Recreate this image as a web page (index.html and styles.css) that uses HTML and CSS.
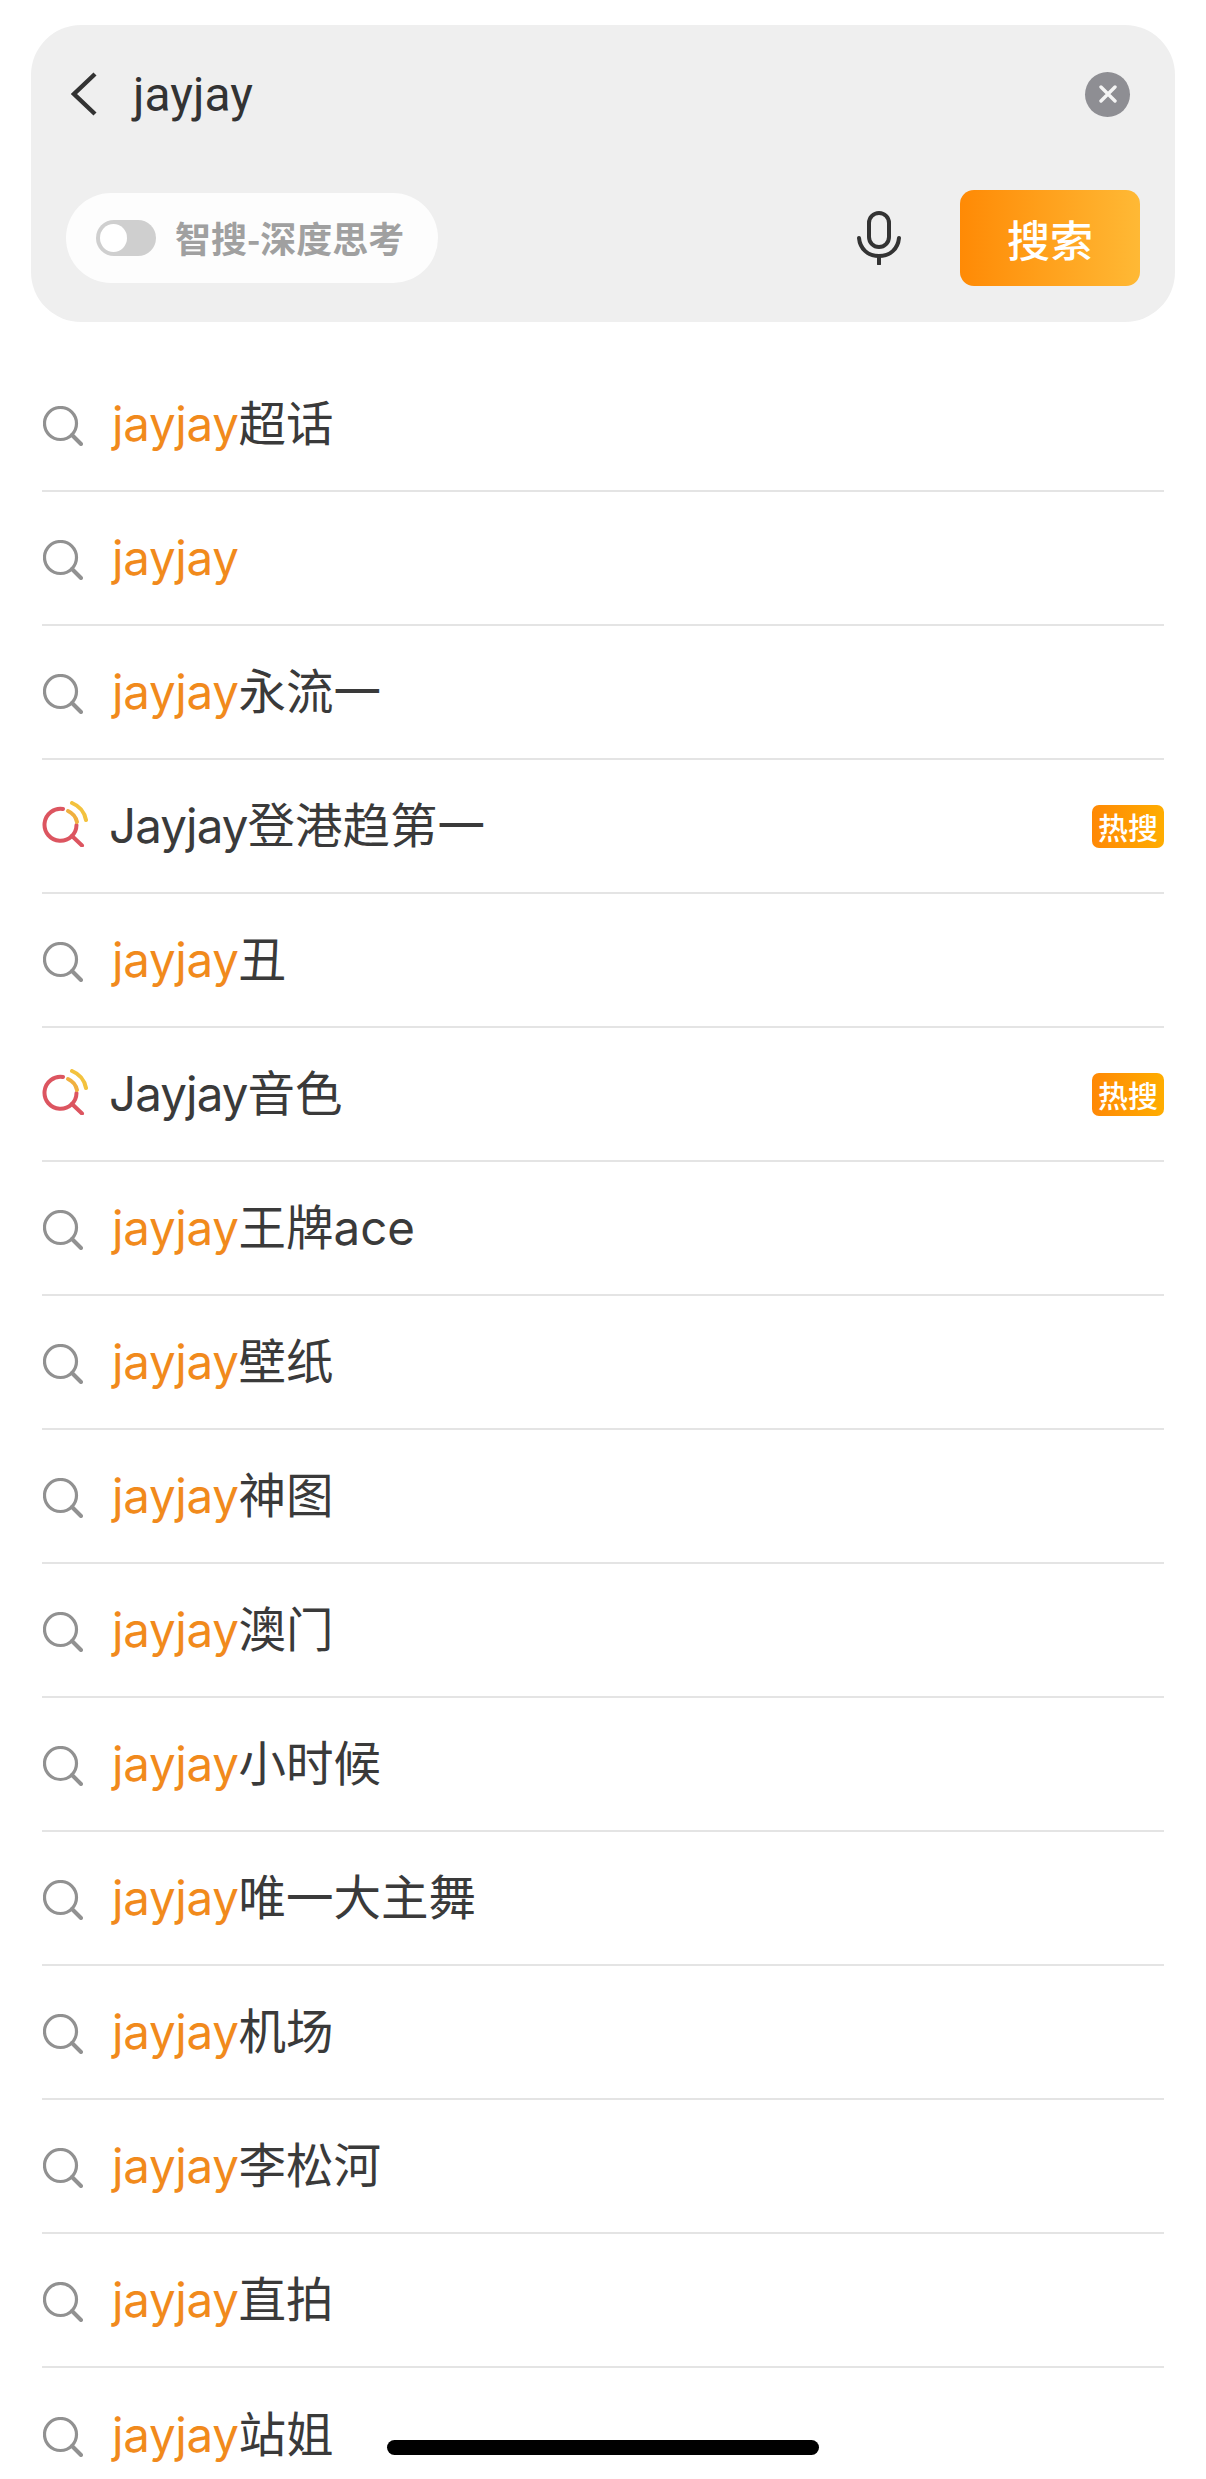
FILE: index.html
```html
<!DOCTYPE html>
<html lang="zh-CN">
<head>
<meta charset="UTF-8" />
<meta name="viewport" content="width=device-width, initial-scale=1.0"/>
<title>搜索</title>
<link rel="stylesheet" href="styles.css">
</head>
<body>

<svg class="sprite" xmlns="http://www.w3.org/2000/svg">
    <symbol id="icon-search" viewBox="0 0 40 40">
        <circle cx="17.5" cy="17.5" r="16" fill="none" stroke="#919191" stroke-width="3.2"/>
        <path d="M29 29 L38 38" fill="none" stroke="#919191" stroke-width="4" stroke-linecap="round"/>
    </symbol>
    <symbol id="icon-hot" viewBox="0 0 46 46">
        <path d="M21 8 A16 16 0 1 0 34.5 24" fill="none" stroke="#dc5560" stroke-width="4" stroke-linecap="round"/>
        <path d="M30 35 L40 44.5" fill="none" stroke="#dc5560" stroke-width="4" stroke-linecap="round"/>
        <path d="M26 10 A16 16 0 0 1 35 21" fill="none" stroke="#f0b040" stroke-width="4" stroke-linecap="round"/>
        <path d="M30 2 A23 23 0 0 1 44 19" fill="none" stroke="#f3c23e" stroke-width="4" stroke-linecap="round"/>
    </symbol>
</svg>

<div class="search-panel">
    <div class="input-row">
        <svg class="back-icon" viewBox="0 0 26 44">
            <path d="M24 2 L3 22 L24 42" fill="none" stroke="#333" stroke-width="4.4"/>
        </svg>
        <span class="query">jayjay</span>
        <span class="clear-btn">
            <svg viewBox="0 0 18 18"><path d="M2 2 L16 16 M16 2 L2 16" fill="none" stroke="#f4f4f4" stroke-width="3.4" stroke-linecap="round"/></svg>
        </span>
    </div>
    <div class="action-row">
        <div class="deep-toggle">
            <span class="switch"><span class="switch-knob"></span></span>
            <span class="deep-label">智搜-深度思考</span>
        </div>
        <svg class="mic-icon" viewBox="0 0 44 54">
            <rect x="12" y="2" width="20" height="34" rx="10" fill="none" stroke="#333" stroke-width="4"/>
            <path d="M2 27 C3 38 11 45 22 45 C33 45 41 38 42 27" fill="none" stroke="#333" stroke-width="4" stroke-linecap="round"/>
            <path d="M22 45 L22 53" fill="none" stroke="#333" stroke-width="4" stroke-linecap="round"/>
        </svg>
        <button class="search-btn">搜索</button>
    </div>
</div>

<ul class="suggest-list">
    <li class="suggest-item"><svg class="item-icon"><use href="#icon-search"/></svg><span class="item-text"><em>jayjay</em>超话</span></li>
    <li class="suggest-item"><svg class="item-icon"><use href="#icon-search"/></svg><span class="item-text"><em>jayjay</em></span></li>
    <li class="suggest-item"><svg class="item-icon"><use href="#icon-search"/></svg><span class="item-text"><em>jayjay</em>永流一</span></li>
    <li class="suggest-item"><svg class="item-icon hot"><use href="#icon-hot"/></svg><span class="item-text"><span class="cap">Jayjay</span>登港趋第一</span><span class="hot-badge">热搜</span></li>
    <li class="suggest-item"><svg class="item-icon"><use href="#icon-search"/></svg><span class="item-text"><em>jayjay</em>丑</span></li>
    <li class="suggest-item"><svg class="item-icon hot"><use href="#icon-hot"/></svg><span class="item-text"><span class="cap">Jayjay</span>音色</span><span class="hot-badge">热搜</span></li>
    <li class="suggest-item"><svg class="item-icon"><use href="#icon-search"/></svg><span class="item-text"><em>jayjay</em>王牌ace</span></li>
    <li class="suggest-item"><svg class="item-icon"><use href="#icon-search"/></svg><span class="item-text"><em>jayjay</em>壁纸</span></li>
    <li class="suggest-item"><svg class="item-icon"><use href="#icon-search"/></svg><span class="item-text"><em>jayjay</em>神图</span></li>
    <li class="suggest-item"><svg class="item-icon"><use href="#icon-search"/></svg><span class="item-text"><em>jayjay</em>澳门</span></li>
    <li class="suggest-item"><svg class="item-icon"><use href="#icon-search"/></svg><span class="item-text"><em>jayjay</em>小时候</span></li>
    <li class="suggest-item"><svg class="item-icon"><use href="#icon-search"/></svg><span class="item-text"><em>jayjay</em>唯一大主舞</span></li>
    <li class="suggest-item"><svg class="item-icon"><use href="#icon-search"/></svg><span class="item-text"><em>jayjay</em>机场</span></li>
    <li class="suggest-item"><svg class="item-icon"><use href="#icon-search"/></svg><span class="item-text"><em>jayjay</em>李松河</span></li>
    <li class="suggest-item"><svg class="item-icon"><use href="#icon-search"/></svg><span class="item-text"><em>jayjay</em>直拍</span></li>
    <li class="suggest-item"><svg class="item-icon"><use href="#icon-search"/></svg><span class="item-text"><em>jayjay</em>站姐</span></li>
</ul>

<div class="home-indicator"></div>

</body>
</html>
```
FILE: styles.css
```css
html, body {
    margin: 0;
    padding: 0;
}

body {
    width: 1206px;
    height: 2479px;
    overflow: hidden;
    position: relative;
    background: #fff;
    font-family: Inter, "Noto Sans CJK SC", sans-serif;
    color: #3a3a3a;
}

.sprite {
    display: none;
}

/* top search panel */
.search-panel {
    margin: 25px 31px 0 31px;
    height: 297px;
    box-sizing: border-box;
    padding: 45px 35px 0 35px;
    background: #efefef;
    border-radius: 50px;
}

.input-row {
    display: flex;
    align-items: center;
    height: 48px;
    padding-left: 5px;
}

.back-icon {
    width: 26px;
    height: 44px;
}

.query {
    margin-left: 36px;
    padding-top: 2px;
    font-family: Roboto, sans-serif;
    font-size: 48px;
    line-height: 48px;
    color: #333;
    flex: 1;
}

.clear-btn {
    width: 45px;
    height: 45px;
    margin-right: 10px;
    border-radius: 50%;
    background: #8e8e93;
    display: flex;
    align-items: center;
    justify-content: center;
}

.clear-btn svg {
    width: 18px;
    height: 18px;
}

.action-row {
    display: flex;
    align-items: center;
    margin-top: 72px;
    height: 96px;
}

.deep-toggle {
    display: flex;
    align-items: center;
    width: 372px;
    height: 90px;
    box-sizing: border-box;
    padding-left: 30px;
    background: #fdfdfd;
    border-radius: 45px;
}

.switch {
    width: 60px;
    height: 36px;
    border-radius: 18px;
    background: #cfcfcf;
    display: flex;
    align-items: center;
    padding-left: 4px;
    box-sizing: border-box;
}

.switch-knob {
    width: 27px;
    height: 28px;
    border-radius: 50%;
    background: #fff;
}

.deep-label {
    margin-left: 19px;
    padding-bottom: 3px;
    font-family: "Noto Sans CJK SC", sans-serif;
    font-size: 36px;
    font-weight: 700;
    color: #a0a0a0;
    white-space: nowrap;
}

.mic-icon {
    width: 44px;
    height: 54px;
    margin-left: 419px;
}

.search-btn {
    width: 180px;
    height: 96px;
    margin-left: 59px;
    border: none;
    border-radius: 14px;
    background: linear-gradient(90deg, #ff8a05, #ffb935);
    color: #fff;
    font-family: "Noto Sans CJK SC", sans-serif;
    font-size: 43px;
    font-weight: 500;
    padding: 0;
}

/* suggestion rows */
.suggest-list {
    list-style: none;
    margin: 36px 42px 0 42px;
    padding: 0;
}

.suggest-item {
    display: flex;
    align-items: center;
    height: 134px;
    box-sizing: border-box;
    border-bottom: 2px solid #e4e4e4;
}

.suggest-item:last-child {
    border-bottom: none;
}

.item-icon {
    width: 40px;
    height: 40px;
    margin-left: 1px;
    margin-top: 4px;
    flex-shrink: 0;
}

.item-icon.hot {
    width: 46px;
    height: 46px;
    margin-left: 0;
    margin-top: -4px;
    margin-right: -8px;
}

.item-text {
    margin-left: 29px;
    font-size: 47.5px;
    line-height: 68px;
    white-space: nowrap;
    flex: 1;
}

.item-text em {
    font-style: normal;
    letter-spacing: -0.3px;
    color: #f18a1c;
}

.item-text .cap {
    letter-spacing: -0.9px;
}

.hot-badge {
    width: 72px;
    height: 43px;
    border-radius: 7px;
    background: linear-gradient(90deg, #ff8805, #ffad00);
    color: #fff;
    font-family: "Noto Sans CJK SC", sans-serif;
    font-size: 30px;
    font-weight: 500;
    line-height: 43px;
    text-align: center;
}

.home-indicator {
    position: absolute;
    left: 387px;
    top: 2440px;
    width: 432px;
    height: 15px;
    border-radius: 8px;
    background: #000;
}
```
